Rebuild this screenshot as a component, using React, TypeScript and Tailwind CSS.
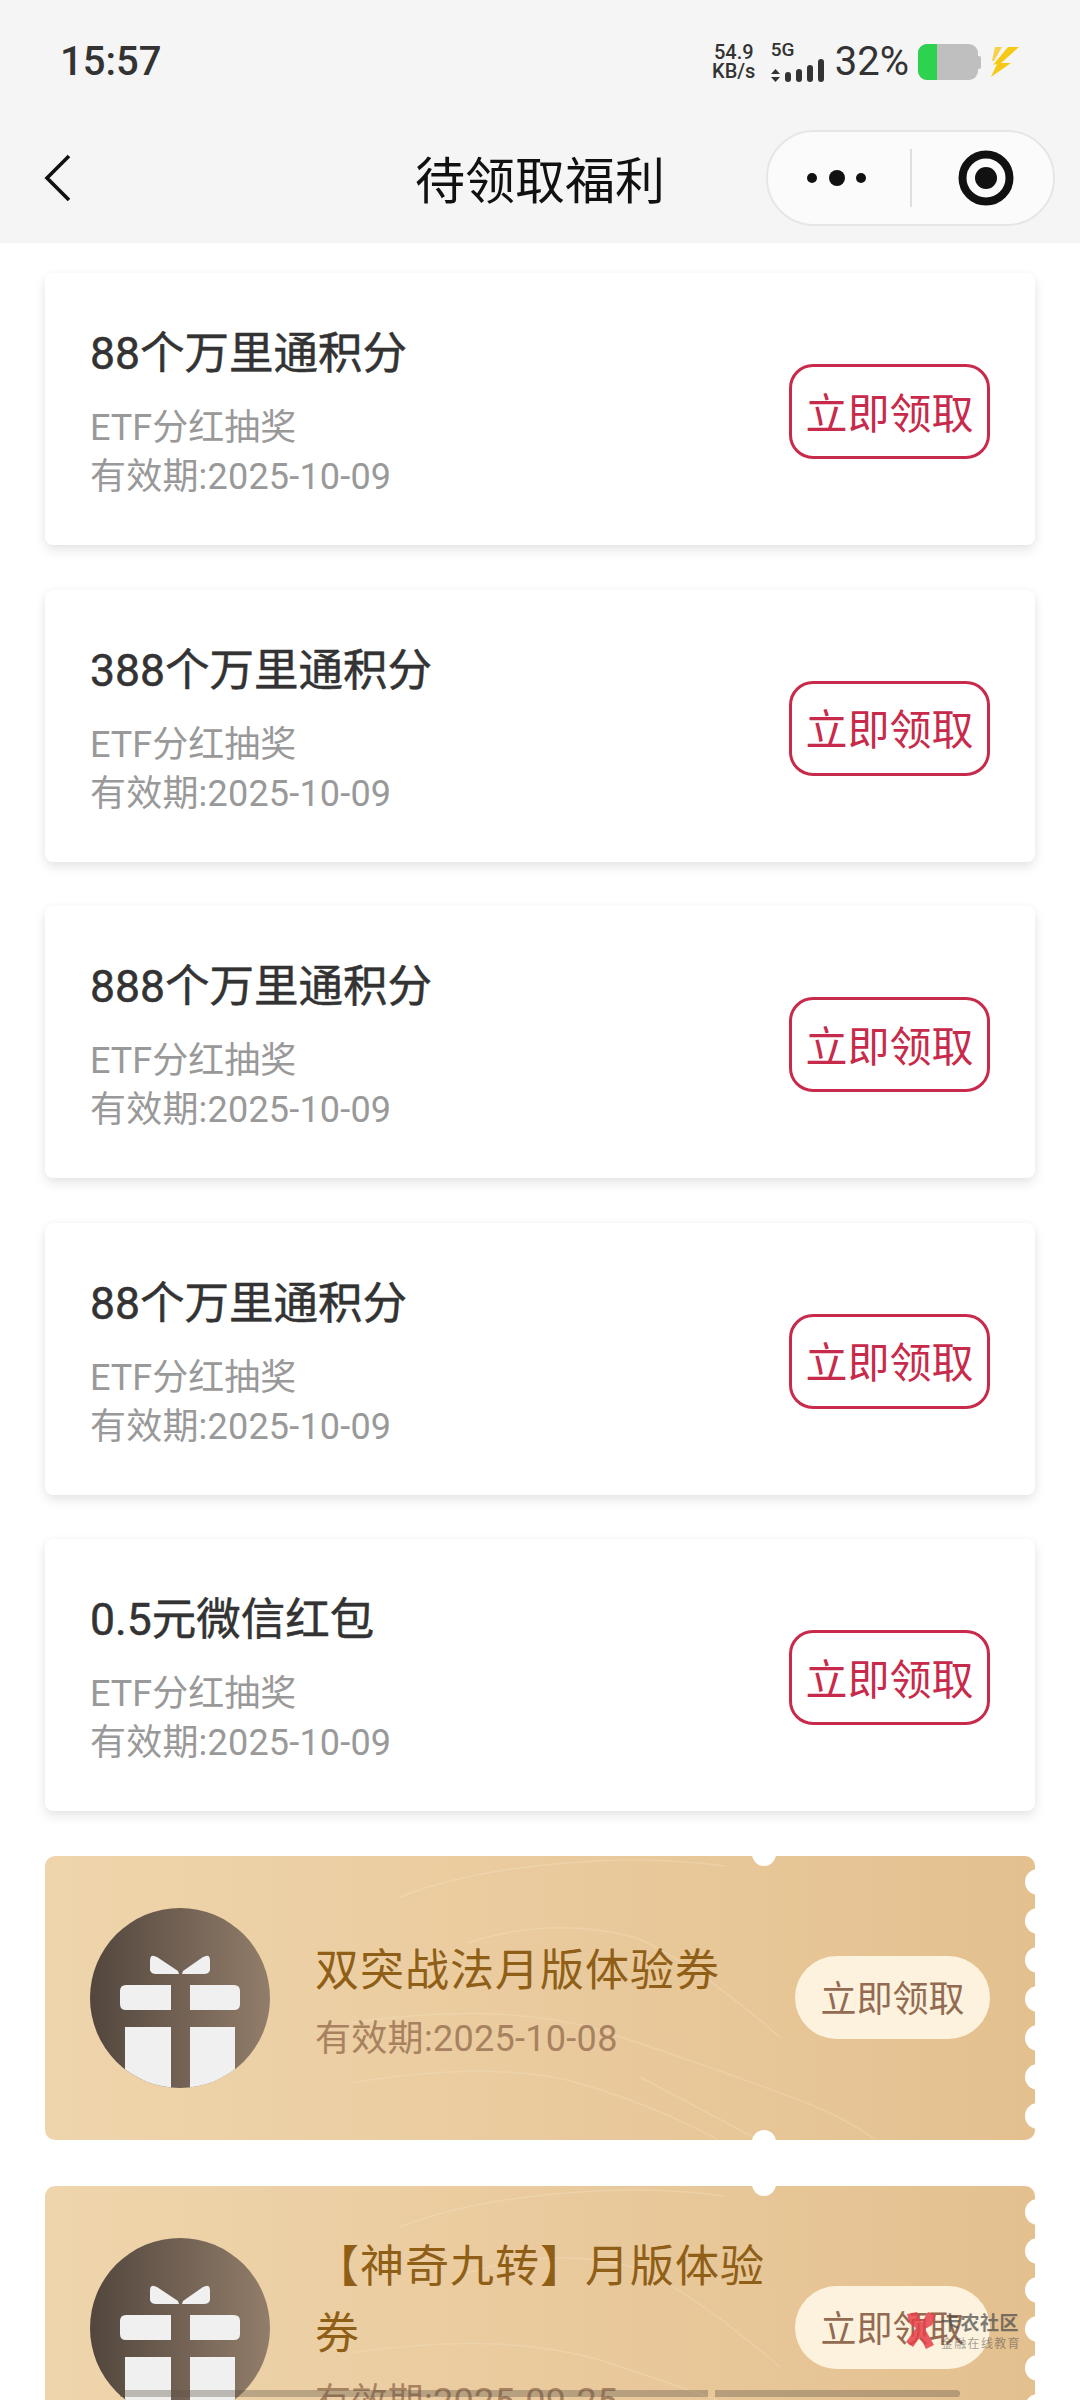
const font = { fontFamily: 'Roboto, "Noto Sans CJK SC", sans-serif' };

function StatusBar() {
  return (
    <div className="flex h-[120px] items-center pl-[60px] pr-[60px] pt-[4px] text-[#333]">
      <span className="text-[40px] font-medium leading-none">15:57</span>
      <div className="ml-auto flex items-center">
        <div className="flex w-[48px] flex-col items-center text-[20px] font-medium leading-[19px]">
          <span>54.9</span>
          <span>KB/s</span>
        </div>
        <div className="ml-[13px] flex w-[56px] flex-col">
          <span className="text-[19px] font-medium leading-[16px]">5G</span>
          <svg width="56" height="24" viewBox="0 10 56 24">
            <path d="M4.5 21 L9 26 H0 Z M4.5 34 L0 29 H9 Z" fill="#333" />
            <rect x="14" y="24" width="6" height="10" rx="3" fill="#333" />
            <rect x="25" y="21" width="6" height="13" rx="3" fill="#333" />
            <rect x="36" y="17" width="6" height="17" rx="3" fill="#333" />
            <rect x="47" y="11" width="6" height="23" rx="3" fill="#333" />
          </svg>
        </div>
        <span className="ml-[8px] text-[40px] leading-none">32%</span>
        <div className="ml-[9px] flex items-center">
          <div className="flex h-[36px] w-[60px] overflow-hidden rounded-[9px] bg-[#bfbfbf]">
            <div className="w-[19px] bg-[#2dd24f]" />
          </div>
          <div className="h-[13px] w-[3px] rounded-r-[2px] bg-[#bfbfbf]" />
        </div>
        <svg className="ml-[9px]" width="30" height="32" viewBox="0 0 30 32">
          <path d="M5 1 H12 L4 15 H2 Z" fill="#f6d24a" />
          <path d="M18 1 H29 L11 17 H21 L1 31 L7 18 L3 19 Z" fill="#f6c915" />
        </svg>
      </div>
    </div>
  );
}

function NavBar() {
  return (
    <div className="relative flex h-[123px] items-start">
      <svg className="absolute left-[42px] top-[33px]" width="32" height="48" viewBox="0 0 32 48">
        <path d="M27 3 L5 25 L27 47" fill="none" stroke="#111" strokeWidth="3.6" />
      </svg>
      <div className="w-full pt-[29px] text-center text-[50px] leading-[66px] text-[#111]">待领取福利</div>
      <div className="absolute left-[766px] top-[10px] flex h-[96px] w-[289px] items-center rounded-full border-2 border-[#e6e6e6] bg-[#fbfbfb]">
        <svg className="ml-[38px]" width="60" height="20" viewBox="0 0 60 20">
          <circle cx="6" cy="10" r="5" fill="#111" />
          <circle cx="31" cy="10" r="8" fill="#111" />
          <circle cx="55" cy="10" r="5" fill="#111" />
        </svg>
        <div className="ml-[44px] h-[58px] w-[2px] bg-[#dedede]" />
        <svg className="ml-[46px]" width="56" height="56" viewBox="0 0 56 56">
          <circle cx="28" cy="28" r="23.5" fill="none" stroke="#111" strokeWidth="8" />
          <circle cx="28" cy="28" r="11" fill="#111" />
        </svg>
      </div>
    </div>
  );
}

function Card({ title }: { title: string }) {
  return (
    <div className="flex h-[272px] items-center justify-between rounded-[8px] bg-white pl-[45px] pr-[45px] shadow-[0_5px_12px_rgba(0,0,0,0.10),0_0_8px_rgba(0,0,0,0.025)]">
      <div className="mt-[8px] flex flex-col">
        <div className="text-[44.5px] leading-[60px] text-[#333] [-webkit-text-stroke:0.5px_#333]">{title}</div>
        <div className="mt-[20px] text-[36px] leading-[49px] text-[#999]">ETF分红抽奖</div>
        <div className="text-[36px] leading-[49px] tracking-[0.2px] text-[#999]">有效期:2025-10-09</div>
      </div>
      <div className="mt-[5px] flex h-[95px] w-[201px] items-center justify-center rounded-[24px] border-[3px] border-[#c72a4b] pt-[6px] text-[42px] leading-none text-[#c72a4b]">
        立即领取
      </div>
    </div>
  );
}

function Gift({ id }: { id: string }) {
  return (
    <svg className="shrink-0" width="180" height="180" viewBox="0 0 180 180">
      <defs>
        <linearGradient id={id + "Bg"} x1="0" x2="1" y1="0" y2="0">
          <stop offset="0" stopColor="#52463d" />
          <stop offset="1" stopColor="#927d6a" />
        </linearGradient>
        <clipPath id={id + "Clip"}>
          <circle cx="90" cy="90" r="90" />
        </clipPath>
      </defs>
      <circle cx="90" cy="90" r="90" fill={`url(#${id}Bg)`} />
      <g clipPath={`url(#${id}Clip)`} fill="#f0f0f0">
        <path d="M64 48 Q60 47 60 53 L60 62 Q61 66 66 66 L89 66 L88 63 L67 49 Z" />
        <path d="M116 48 Q120 47 120 53 L120 62 Q119 66 114 66 L92 66 L93 63 L113 49 Z" />
        <path d="M36 77 H81 V102 H36 Q30 102 30 96 V83 Q30 77 36 77 Z" />
        <path d="M100 77 H144 Q150 77 150 83 V96 Q150 102 144 102 H100 Z" />
        <rect x="35" y="119" width="46" height="70" />
        <rect x="100" y="119" width="45" height="70" />
      </g>
    </svg>
  );
}

function Coupon({ id, title, date, titleClass, className }: { id: string; title: string; date: string; titleClass?: string; className?: string }) {
  return (
    <div className={"relative flex h-[284px] items-center overflow-hidden rounded-[10px] bg-gradient-to-r from-[#efd5ac] to-[#e4c08f] pl-[45px] pr-[45px] " + (className ?? "")}>
      <svg className="absolute inset-0" width="990" height="284" viewBox="0 0 990 284" fill="none" stroke="#f7e6c8" strokeWidth="1.5" opacity="0.3">
        <path d="M355 41 Q420 15 522 7 Q600 0 680 10" />
        <path d="M422 87 Q505 60 588 81 Q640 100 735 181" />
        <path d="M305 167 Q455 145 555 174 Q650 205 762 247 Q800 262 830 283" />
        <path d="M305 227 Q438 205 522 224 Q600 245 672 283" />
        <path d="M595 221 Q650 250 712 283" />
      </svg>
      <span className="absolute left-[707px] top-[-14px] h-[24px] w-[24px] rounded-full bg-white" />
      <span className="absolute bottom-[-14px] left-[707px] h-[24px] w-[24px] rounded-full bg-white" />
      <div className="absolute right-[-16px] top-[13px] flex w-[26px] flex-col gap-[13px]">
        {[0, 1, 2, 3, 4, 5, 6].map((i) => (
          <span key={i} className="h-[26px] w-[26px] rounded-full bg-white" />
        ))}
      </div>
      <Gift id={id} />
      <div className="relative ml-[45px] mt-[6px] flex min-w-0 flex-1 flex-col">
        <div className={"text-[44px] leading-[67px] tracking-[1px] text-[#8f5f17] " + (titleClass ?? "")}>{title}</div>
        <div className="mt-[9px] text-[36px] leading-[50px] tracking-[0.3px] text-[#a88260]">{date}</div>
      </div>
      <div className="relative flex h-[83px] w-[195px] shrink-0 items-center justify-center rounded-full bg-[#fcf2dd] pt-[5px] text-[36px] leading-none text-[#926b52]">
        立即领取
      </div>
    </div>
  );
}

function Watermark() {
  return (
    <div className="absolute left-[905px] top-[2312px] flex items-start">
      <svg width="36" height="38" viewBox="0 0 36 38" fill="#e8404a" opacity="0.85">
        <path d="M2 2 L12 0 L17 10 L23 0 L31 3 L27 13 L20 17 L29 33 L21 37 L15 25 L8 35 L1 30 L11 16 L5 12 Z" />
      </svg>
      <div className="flex flex-col text-[#4a4a4a] opacity-70">
        <span className="text-[19px] font-bold leading-[24px] tracking-[0.5px]">卡农社区</span>
        <span className="text-[12px] leading-[16px] tracking-[1.3px] opacity-70">金融在线教育</span>
      </div>
    </div>
  );
}

export default function App() {
  return (
    <div className="relative h-[2400px] w-[1080px] overflow-hidden bg-white" style={font}>
      <div className="h-[243px] bg-[#f5f5f5]">
        <StatusBar />
        <NavBar />
      </div>
      <div className="flex flex-col gap-[44.6px] px-[45px] pt-[30px]">
        <Card title="88个万里通积分" />
        <Card title="388个万里通积分" />
        <Card title="888个万里通积分" />
        <Card title="88个万里通积分" />
        <Card title="0.5元微信红包" />
        <Coupon id="a" title="双突战法月版体验券" date="有效期:2025-10-08" />
        <Coupon id="b" className="mt-[1px]" title="【神奇九转】月版体验券" date="有效期:2025-09-25" titleClass="w-[460px]" />
      </div>
      <Watermark />
      <div className="absolute left-[120px] top-[2390px] flex gap-[7px]">
        <div className="h-[7px] w-[588px] bg-[rgba(90,80,70,0.35)]" />
        <div className="h-[7px] w-[245px] rounded-r-[4px] bg-[rgba(90,80,70,0.35)]" />
      </div>
    </div>
  );
}
